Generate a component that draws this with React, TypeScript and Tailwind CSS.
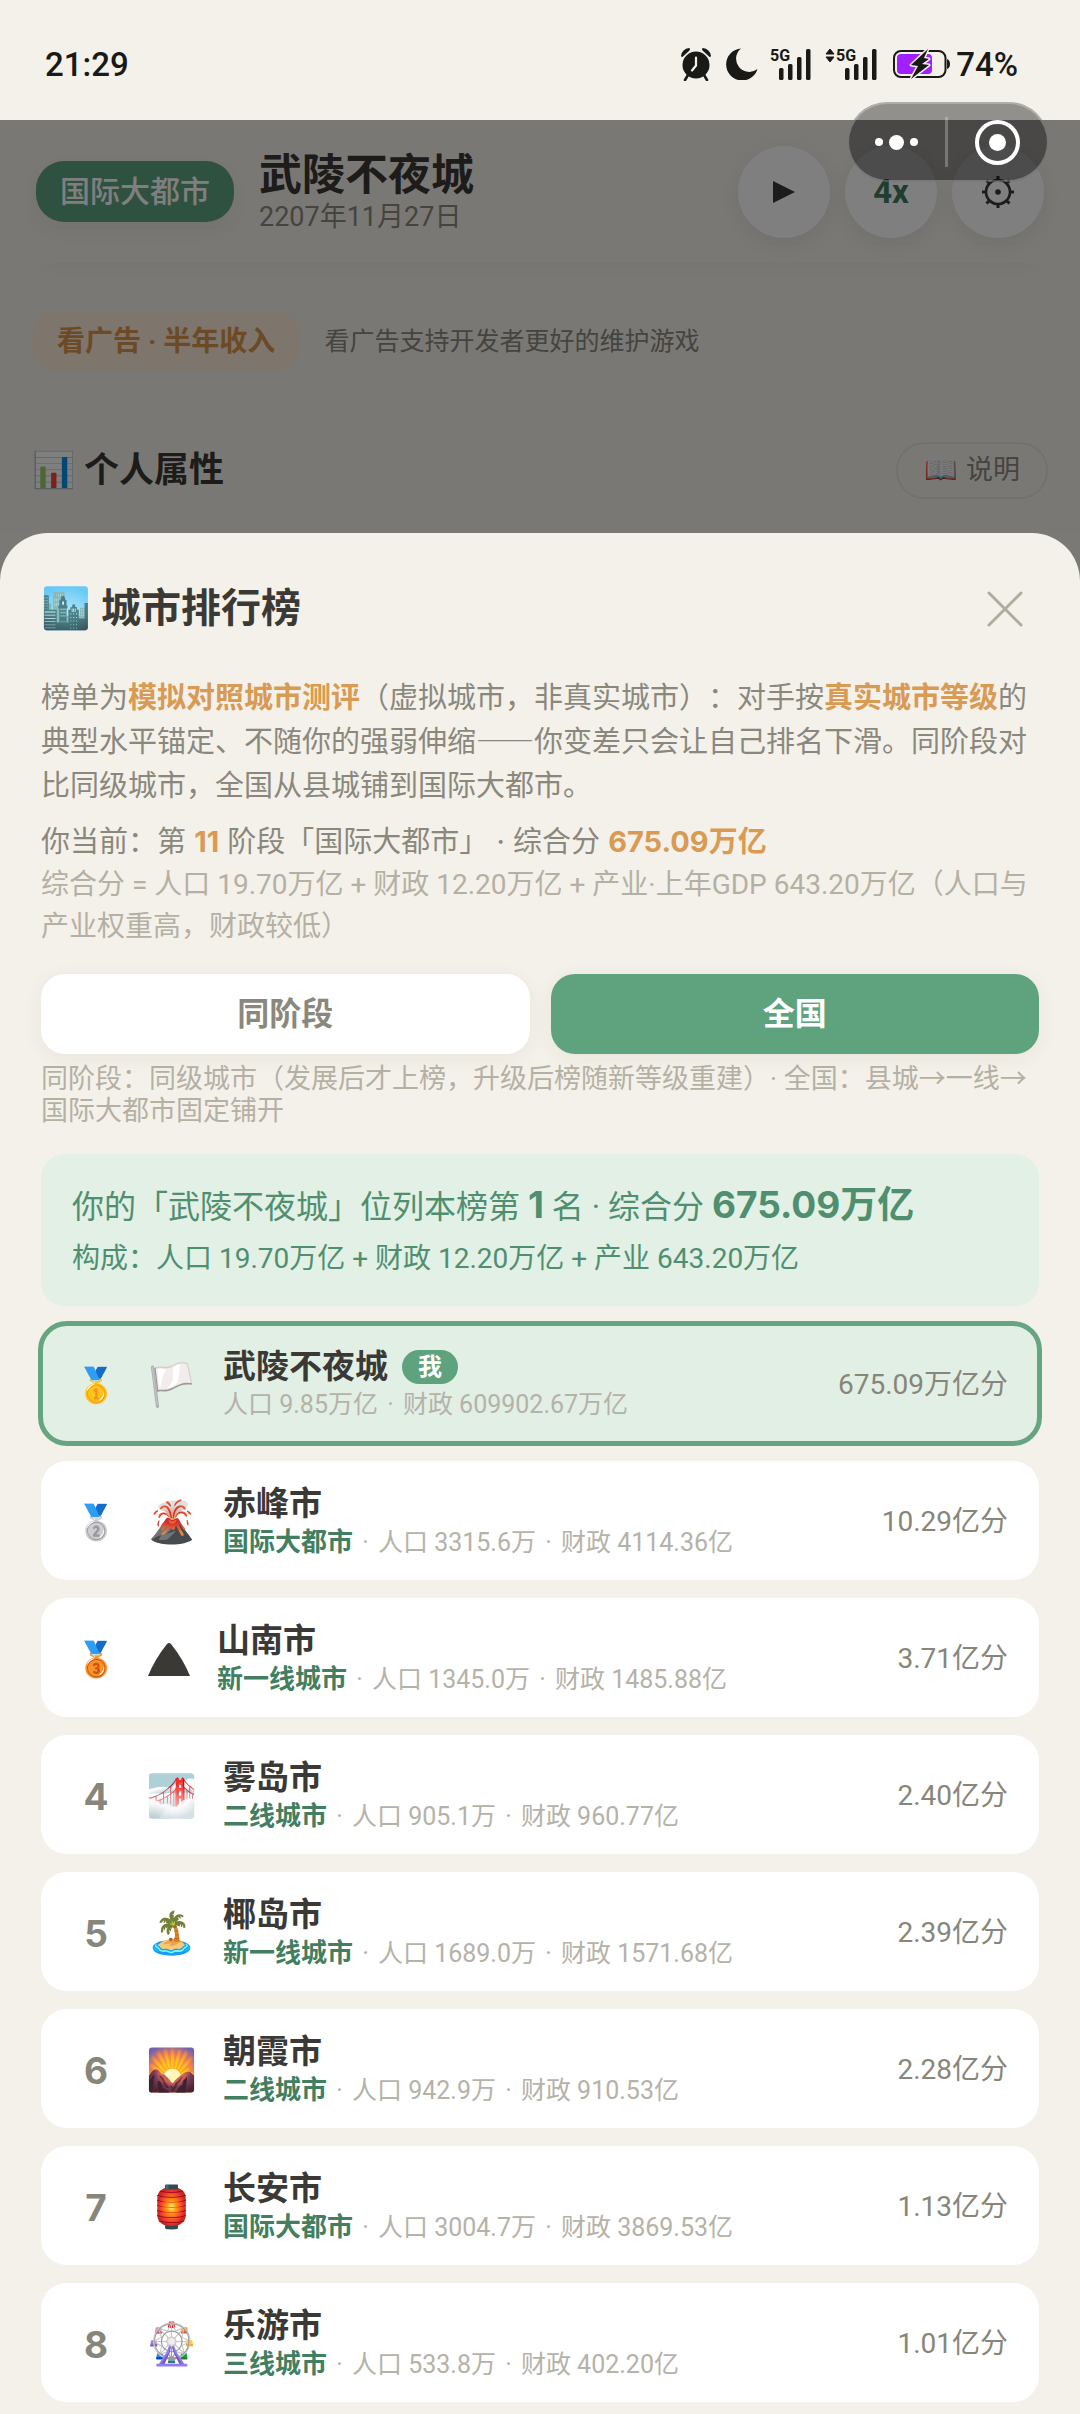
import type { ReactNode } from "react";

type City = {
  name: string;
  icon: string;
  tier?: string;
  population: string;
  finance: string;
  score: string;
  me?: boolean;
};

const cities: City[] = [
  { name: "武陵不夜城", icon: "🏳️", population: "9.85万亿", finance: "609902.67万亿", score: "675.09万亿分", me: true },
  { name: "赤峰市", icon: "🌋", tier: "国际大都市", population: "3315.6万", finance: "4114.36亿", score: "10.29亿分" },
  { name: "山南市", icon: "peak", tier: "新一线城市", population: "1345.0万", finance: "1485.88亿", score: "3.71亿分" },
  { name: "雾岛市", icon: "🌁", tier: "二线城市", population: "905.1万", finance: "960.77亿", score: "2.40亿分" },
  { name: "椰岛市", icon: "🏝️", tier: "新一线城市", population: "1689.0万", finance: "1571.68亿", score: "2.39亿分" },
  { name: "朝霞市", icon: "🌄", tier: "二线城市", population: "942.9万", finance: "910.53亿", score: "2.28亿分" },
  { name: "长安市", icon: "🏮", tier: "国际大都市", population: "3004.7万", finance: "3869.53亿", score: "1.13亿分" },
  { name: "乐游市", icon: "🎡", tier: "三线城市", population: "533.8万", finance: "402.20亿", score: "1.01亿分" },
];

const medals = ["🥇", "🥈", "🥉"];

function AlarmIcon() {
  return (
    <svg width="32" height="34" viewBox="0 0 32 34" fill="#191916" aria-hidden="true">
      <circle cx="16" cy="18" r="13.5" />
      <path d="M8 28l-3 5M24 28l3 5" stroke="#191916" strokeWidth="2.6" strokeLinecap="round" />
      <path d="M1 9a9 9 0 0 1 8-8q2 1 0 3L3.500 9Q2 11 1 9ZM31 9a9 9 0 0 0-8-8q-2 1 0 3l5.500 5Q30 11 31 9Z" />
      <path d="M16 10.500v8l-4 5" stroke="#f4f1ea" strokeWidth="2.200" fill="none" strokeLinecap="round" />
    </svg>
  );
}

function MoonIcon() {
  return (
    <svg width="32" height="32" viewBox="0 0 32 32" fill="#191916" aria-hidden="true">
      <path d="M15 .5A16 16 0 1 0 31.500 21 13 13 0 0 1 15 .5Z" />
    </svg>
  );
}

function SignalIcon({ data = false }: { data?: boolean }) {
  return (
    <svg
      className={data ? "w-[52px] overflow-visible" : "w-[41px] overflow-visible"}
      height="33"
      viewBox={data ? "-11 0 52 33" : "0 0 41 33"}
      fill="#191916"
      aria-hidden="true"
    >
      {data && <path d="M-10 6l4-5 4 5ZM-10 9h8l-4 5Z" stroke="#191916" strokeLinejoin="round" />}
      <text x="0" y="13" fontSize="16" fontWeight="700" fontFamily="Roboto, sans-serif">
        5G
      </text>
      <rect x="9" y="20" width="4.500" height="12" rx="1.500" />
      <rect x="18" y="16" width="4.500" height="16" rx="1.500" />
      <rect x="27" y="9" width="4.500" height="23" rx="1.500" />
      <rect x="36" y="1" width="4.500" height="31" rx="1.500" />
    </svg>
  );
}

function BatteryIcon() {
  return (
    <svg width="57" height="32" viewBox="0 0 57 32" aria-hidden="true">
      <rect x="1" y="3" width="51.500" height="26" rx="7" fill="none" stroke="#191916" strokeWidth="2" />
      <path d="M54 11q3 1 3 5t-3 5Z" fill="#191916" />
      <rect x="4" y="6" width="35" height="20" rx="4" fill="#a020ff" />
      <path
        d="M35 1L18 17l7 1-7 13 18-14-7-1 7-5-5-1Z"
        fill="#191916"
        stroke="#f4f1ea"
        strokeWidth="3"
        paintOrder="stroke"
        strokeLinejoin="round"
      />
    </svg>
  );
}

function GearIcon() {
  return (
    <svg width="34" height="34" viewBox="-17 -17 34 34" stroke="#3a3935" fill="none" aria-hidden="true">
      <circle r="12" strokeWidth="2.600" />
      <circle r="2.800" fill="#3a3935" stroke="none" />
      <path
        d="M0-16v4M0 16v-4M-16 0h4M16 0h-4M-11.500-11.500l3 3M11.500 11.500l-3-3M-11.500 11.500l3-3M11.500-11.500l-3 3"
        strokeWidth="3"
      />
    </svg>
  );
}

function RoundButton({ label, children }: { label: string; children: ReactNode }) {
  return (
    <button
      type="button"
      aria-label={label}
      className="flex size-[92px] items-center justify-center rounded-full bg-white shadow-[0_6px_24px_rgba(0,0,0,0.08)]"
    >
      {children}
    </button>
  );
}

function StatusBar() {
  return (
    <div className="flex h-[120px] items-center justify-between pt-2 pr-[62px] pl-[45px] text-[33px] leading-none font-medium text-[#191916]">
      <time>21:29</time>
      <div className="flex items-center">
        <AlarmIcon />
        <span className="w-3.5" />
        <MoonIcon />
        <span className="w-3" />
        <SignalIcon />
        <span className="w-3.5" />
        <SignalIcon data />
        <span className="w-4" />
        <BatteryIcon />
        <span className="ml-1.5">74%</span>
      </div>
    </div>
  );
}

function Capsule() {
  return (
    <div className="absolute top-[102px] right-[31px] z-20 flex h-20 w-[202px] items-center rounded-full border-2 border-white/25 bg-black/40">
      <button type="button" aria-label="更多" className="flex h-full w-[96px] items-center justify-center gap-1.5 pr-0.5">
        <span className="size-2 rounded-full bg-white" />
        <span className="size-[15px] rounded-full bg-white" />
        <span className="size-2 rounded-full bg-white" />
      </button>
      <span className="h-[50px] w-[3px] bg-white/25" />
      <button type="button" aria-label="关闭小程序" className="flex h-full flex-1 items-center justify-center">
        <span className="flex size-[45px] items-center justify-center rounded-full border-4 border-white">
          <span className="size-[17px] rounded-full bg-white" />
        </span>
      </button>
    </div>
  );
}

function GamePage() {
  return (
    <div className="relative bg-[#f4f1ea] pb-[34px]">
      <header className="mx-9 flex h-[143px] items-center gap-[25px] shadow-[0_12px_20px_-10px_rgba(0,0,0,0.05)]">
        <span className="rounded-[28px] bg-[#5ea27e] px-6 text-[30px] leading-[61px] font-medium text-white shadow-[0_8px_24px_rgba(0,0,0,0.06)]">
          国际大都市
        </span>
        <div className="flex-1 pt-1">
          <h1 className="text-[43px] leading-[46px] font-bold text-[#3a3935]">武陵不夜城</h1>
          <p className="text-[27px] leading-[38px] text-[#8a887d]">2207年11月27日</p>
        </div>
        <div className="flex gap-[15px]">
          <RoundButton label="播放">
            <svg width="22" height="22" viewBox="0 0 22 22" fill="#3a3935" aria-hidden="true">
              <path d="M0 0l22 11L0 22Z" />
            </svg>
          </RoundButton>
          <RoundButton label="速度 4x">
            <span className="text-[33px] font-bold text-[#3f7d5e]">4x</span>
          </RoundButton>
          <RoundButton label="设置">
            <GearIcon />
          </RoundButton>
        </div>
      </header>

      <div className="mt-12 flex items-center gap-6 px-8">
        <button
          type="button"
          className="rounded-3xl bg-[#fcebd8] px-[25px] text-[28px] leading-[61px] font-bold text-[#d9944d]"
        >
          看广告 · 半年收入
        </button>
        <p className="text-[25px] leading-[40px] text-[#8a887d]">看广告支持开发者更好的维护游戏</p>
      </div>

      <div className="mt-[70px] flex items-center justify-between px-8">
        <h2 className="flex items-center gap-2 text-[35px] leading-none font-bold text-[#3a3935]">
          <span>📊</span>
          个人属性
        </h2>
        <button
          type="button"
          className="flex items-center gap-2 rounded-[28px] border-2 border-[#e6e2d8] px-[26px] text-[27px] leading-[53px] text-[#8a887d]"
        >
          <span>📖</span>
          说明
        </button>
      </div>
      <div className="absolute inset-0 bg-black/50" />
    </div>
  );
}

function Accent({ children }: { children: ReactNode }) {
  return <strong className="font-bold text-[#d99a54]">{children}</strong>;
}

function PanelNumber({ children }: { children: ReactNode }) {
  return (
    <strong className="text-[37px] font-bold [font-family:Inter,'Noto_Sans_CJK_SC',sans-serif]">{children}</strong>
  );
}

function Dot() {
  return <span className="mx-[3px]"> · </span>;
}

function CityRow({ city, rank }: { city: City; rank: number }) {
  return (
    <li
      className={
        city.me
          ? "flex h-[119px] items-center rounded-[26px] bg-[#e2efe5] pt-[3px] pr-[31px] outline-5 -outline-offset-2 outline-[#66a582]"
          : "flex h-[119px] items-center rounded-[26px] bg-white pt-[3px] pr-[31px]"
      }
    >
      <span className="flex w-[105px] justify-center pl-[5px] text-[37px] leading-none font-bold text-[#87867a] [font-family:Inter]">
        {rank <= 3 ? <span className="text-[34px]">{medals[rank - 1]}</span> : rank}
      </span>
      {city.icon === "peak" ? (
        <span className="w-[71px] pl-0.5">
          <svg width="42" height="34" viewBox="0 0 42 34" fill="#3a3935" aria-hidden="true">
            <path d="M0 34Q7 17 19 2q2-2 4 0Q35 17 42 34Z" />
          </svg>
        </span>
      ) : (
        <span className="w-[77px] text-[41px] leading-none">{city.icon}</span>
      )}
      <div className="min-w-0 flex-1">
        <div className="flex items-center gap-3.5 text-[33px] leading-[40px] font-bold text-[#3a3935]">
          {city.name}
          {city.me && (
            <span className="rounded-full bg-[#5ea27e] px-4 text-[24px] leading-[34px] text-white">我</span>
          )}
        </div>
        <p className="text-[25px] leading-[36px] text-[#b5b2a8]">
          {city.tier && (
            <>
              <strong className="text-[26px] font-bold text-[#427f60]">{city.tier}</strong>
              <Dot />
            </>
          )}
          人口 {city.population}
          <Dot />
          财政 {city.finance}
        </p>
      </div>
      <span className="text-[28px] text-[#87867a]">{city.score}</span>
    </li>
  );
}

export default function App() {
  return (
    <div
      lang="zh-CN"
      className="relative min-h-screen bg-[#f4f1ea] [font-family:Roboto,'Noto_Sans_CJK_SC',sans-serif] [text-spacing-trim:space-all]"
    >
      <StatusBar />
      <Capsule />
      <GamePage />

      <div className="bg-[#7a7975]">
        <section
          role="dialog"
          aria-labelledby="rank-title"
          className="rounded-t-[48px] bg-[#f4f1ea] px-[41px] pt-12 pb-[10px]"
        >
          <div className="flex items-center justify-between pr-4">
            <h2 id="rank-title" className="flex items-center gap-2.5 text-[40px] leading-[56px] font-bold text-[#3a3935]">
              <span>🏙️</span>
              城市排行榜
            </h2>
            <button type="button" aria-label="关闭">
              <svg width="36" height="36" viewBox="0 0 36 36" stroke="#b0ad9f" strokeWidth="3" strokeLinecap="round" aria-hidden="true">
                <path d="M2 2l32 32M34 2L2 34" />
              </svg>
            </button>
          </div>

          <div className="mt-9 text-[29px] leading-[44px] text-[#8a887d]">
            <p className="[font-family:'Noto_Sans_CJK_SC',sans-serif]">
              榜单为<Accent>模拟对照城市测评</Accent>（虚拟城市，非真实城市）：对手按<Accent>真实城市等级</Accent>
              的典型水平锚定、不随你的强弱伸缩——你变差只会让自己排名下滑。同阶段对比同级城市，全国从县城铺到国际大都市。
            </p>
            <p className="mt-[15px] [font-family:Inter,'Noto_Sans_CJK_SC',sans-serif]">
              你当前：第 <Accent>11</Accent> 阶段「国际大都市」 · 综合分 <Accent>675.09万亿</Accent>
            </p>
          </div>
          <p className="text-[28px] leading-[42px] text-[#b5b0a4]">
            综合分 = 人口 19.70万亿 + 财政 12.20万亿 + 产业·上年GDP 643.20万亿（人口与产业权重高，财政较低）
          </p>

          <div className="mt-[26px] flex gap-[21px] text-[32px] leading-[80px] font-bold">
            <button
              type="button"
              className="flex-1 rounded-3xl bg-white text-[#8a887d] shadow-[0_4px_20px_rgba(60,50,30,0.06)]"
            >
              同阶段
            </button>
            <button
              type="button"
              className="flex-1 rounded-3xl bg-[#5ea27e] text-white shadow-[0_4px_20px_rgba(60,50,30,0.06)]"
            >
              全国
            </button>
          </div>
          <p className="mt-[9px] text-[27px] leading-[32px] text-[#b5b0a4]">
            同阶段：同级城市（发展后才上榜，升级后榜随新等级重建）· 全国：县城→一线→国际大都市固定铺开
          </p>

          <div className="mt-[27px] rounded-3xl bg-[#e2f0e6] px-[31px] pt-[23px] pb-[23px] text-[#4f8f70]">
            <p className="text-[32px] leading-[56px]">
              你的「武陵不夜城」位列本榜第 <PanelNumber>1</PanelNumber> 名 · 综合分{" "}
              <PanelNumber>675.09万亿</PanelNumber>
            </p>
            <p className="text-[28px] leading-[48px]">构成：人口 19.70万亿 + 财政 12.20万亿 + 产业 643.20万亿</p>
          </div>

          <ol className="mt-[18px] flex flex-col gap-[18px]">
            {cities.map((city, index) => (
              <CityRow key={city.name} city={city} rank={index + 1} />
            ))}
          </ol>
        </section>
      </div>
    </div>
  );
}
